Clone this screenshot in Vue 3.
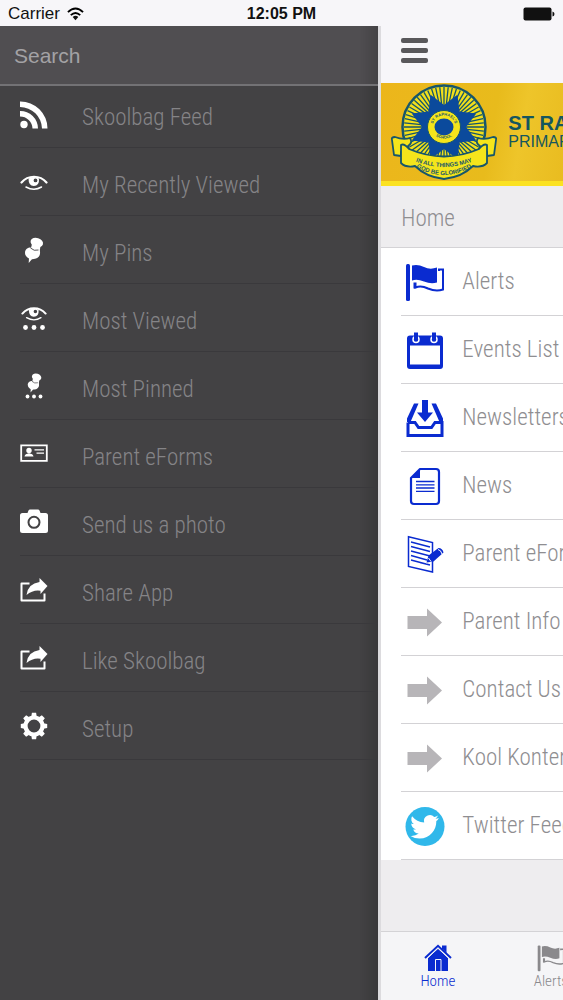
<script setup>
import { ref } from 'vue'

const search = ref('')

const menu = [
  { label: 'Skoolbag Feed', icon: 'rss' },
  { label: 'My Recently Viewed', icon: 'eye' },
  { label: 'My Pins', icon: 'pin' },
  { label: 'Most Viewed', icon: 'eye-dots' },
  { label: 'Most Pinned', icon: 'pin-dots' },
  { label: 'Parent eForms', icon: 'card' },
  { label: 'Send us a photo', icon: 'camera' },
  { label: 'Share App', icon: 'share' },
  { label: 'Like Skoolbag', icon: 'share' },
  { label: 'Setup', icon: 'gear' }
]

const links = [
  { label: 'Alerts', icon: 'flag' },
  { label: 'Events List', icon: 'calendar' },
  { label: 'Newsletters', icon: 'inbox' },
  { label: 'News', icon: 'news' },
  { label: 'Parent eForms', icon: 'form' },
  { label: 'Parent Info', icon: 'arrow' },
  { label: 'Contact Us', icon: 'arrow' },
  { label: 'Kool Kontent', icon: 'arrow' },
  { label: 'Twitter Feed', icon: 'twitter' }
]

// points on a circle around the crest centre
const polar = (r, deg) => {
  const a = (deg - 90) * Math.PI / 180
  return `${(54 + r * Math.cos(a)).toFixed(1)},${(43 + r * Math.sin(a)).toFixed(1)}`
}

const rays = Array.from({ length: 60 }, (_, i) => `M${polar(18, i * 6)}L${polar(40, i * 6)}`).join('')
const star = Array.from({ length: 16 }, (_, i) => polar(i % 2 ? 35 : 22, i * 22.5)).join(' ')
const teeth = Array.from({ length: 8 }, (_, i) => i * 45)
</script>

<template>
  <div class="app">
    <svg class="sprite" aria-hidden="true">
      <symbol id="i-rss" viewBox="0 0 28 28">
        <circle cx="4" cy="23.500" r="3.700" />
        <path d="M0 0.500A27 27 0 0 1 27.500 27.500H22A22 22 0 0 0 0 6ZM0 10A17.500 17.500 0 0 1 18 27.500H12.500A12.500 12.500 0 0 0 0 15.500Z" />
      </symbol>
      <symbol id="i-eye" viewBox="0 0 28 28">
        <path fill="none" stroke="currentColor" stroke-width="2.200" stroke-linecap="round" d="M1.500 13.500C8 5.800 20 5.800 26.500 13.500" />
        <path fill="none" stroke="currentColor" stroke-width="1.500" stroke-linecap="round" d="M6 18C11 20.800 17 20.800 21.500 18" />
        <path fill-rule="evenodd" d="M8.500 9.500Q14 6.500 19 9.500Q19.500 17 13.800 17Q8.500 17 8.500 9.500ZM15.500 9.500A1.900 1.900 0 1 0 15.500 13.300A1.900 1.900 0 1 0 15.500 9.500Z" />
      </symbol>
      <symbol id="i-pin" viewBox="0 0 28 28">
        <ellipse cx="16.800" cy="5.500" rx="6.400" ry="4.600" transform="rotate(18 16.800 5.500)" />
        <path d="M12 7L20.500 9L19.500 15L10.500 13Z" />
        <path d="M5 16C5 12 8 10.500 10.500 10.500Q14 14.500 19.300 12.500C21 16 20 20 16 21.500Q11 23 8 21Q5 19 5 16Z" />
        <path d="M9 20.500L12.500 21.500L8.700 26Z" />
        <path fill="none" stroke="#434244" stroke-width="0.900" d="M10.500 11Q14 14.500 18.500 13" />
      </symbol>
      <symbol id="i-eye-dots" viewBox="0 0 28 28">
        <use href="#i-eye" x="1" y="-4" width="26" height="26" />
        <circle cx="5.500" cy="22.500" r="2.400" /><circle cx="14" cy="22.500" r="2.400" /><circle cx="22.500" cy="22.500" r="2.400" />
      </symbol>
      <symbol id="i-pin-dots" viewBox="0 0 28 28">
        <use href="#i-pin" x="4" y="0" width="21" height="21" />
        <circle cx="7.500" cy="23.500" r="1.900" /><circle cx="14" cy="23.500" r="1.900" /><circle cx="20.500" cy="23.500" r="1.900" />
      </symbol>
      <symbol id="i-card" viewBox="0 0 28 28">
        <path fill="none" stroke="currentColor" stroke-width="1.800" d="M1.200 4.400H26.800V19.800H1.200Z" />
        <circle cx="9" cy="9.500" r="2.700" />
        <path d="M4.500 15.500Q5 12.800 9 12.300Q13 12.800 13.500 15.500ZM14.500 8.300H24V9.500H14.500ZM16.500 11.500H24V12.700H16.500Z" />
      </symbol>
      <symbol id="i-camera" viewBox="0 0 28 28">
        <path fill-rule="evenodd" d="M2.500 4H7.500L8.500 1.500Q9 0.500 10 0.500H18Q19 0.500 19.500 1.500L20.500 4H25.500Q28 4 28 6.500V21.500Q28 24 25.500 24H2.500Q0 24 0 21.500V6.500Q0 4 2.500 4ZM14 6.800A6.500 6.500 0 1 0 14 19.800A6.500 6.500 0 1 0 14 6.800ZM14 8.800A4.500 4.500 0 1 1 14 17.800A4.500 4.500 0 1 1 14 8.800Z" />
      </symbol>
      <symbol id="i-share" viewBox="0 0 28 28">
        <path fill="none" stroke="currentColor" stroke-width="2" stroke-linejoin="round" d="M9.500 6.500H1.500V23.500H24.500V16.500" />
        <path d="M19.500 1L27.500 9L20.500 17V13.700Q13 12.500 6.500 18Q8 6.500 19.500 5Z" />
      </symbol>
      <symbol id="i-gear" viewBox="0 0 28 28">
        <g transform="translate(0 -1)">
          <circle cx="14" cy="14" r="8.500" fill="none" stroke="currentColor" stroke-width="4.200" />
          <path v-for="t in teeth" :key="t" :transform="`rotate(${t} 14 14)`" d="M11.300 4.500L11.900 0.800H16.100L16.700 4.500Z" />
        </g>
      </symbol>
      <symbol id="i-flag" viewBox="0 0 40 40">
        <rect x="1" y="2" width="4" height="37" rx="1.500" />
        <path d="M7 3.500Q13 2 19 5T32 5.500V20.500Q26 22.500 19 19.500T7 18.500Z" />
        <path fill="none" stroke="currentColor" stroke-width="2" d="M34 9V7.500H38V27.500Q31 30 23 26.500Q16 23 10.500 25.500V20.500M9.500 20.500V26.500" />
      </symbol>
      <symbol id="i-calendar" viewBox="0 0 40 40">
        <path fill-rule="evenodd" d="M5 5.500H35Q38 5.500 38 8.500V36Q38 39 35 39H5Q2 39 2 36V8.500Q2 5.500 5 5.500ZM5 15.500V34.500H35V15.500Z" />
        <circle cx="11" cy="9.500" r="3" fill="none" stroke="#fff" stroke-width="1.500" />
        <circle cx="29" cy="9.500" r="3" fill="none" stroke="#fff" stroke-width="1.500" />
        <path d="M9 2.500H13V10H9ZM27 2.500H31V10H27Z" />
      </symbol>
      <symbol id="i-inbox" viewBox="0 0 40 40">
        <path fill="none" stroke="currentColor" stroke-width="3" d="M3 24.500V37.500H37V24.500H30L26.500 29.500H13.500L10 24.500H3" />
        <path d="M9 5.500H13.500L5.500 24H2V20.500ZM31 5.500H26.500L34.500 24H38V20.500ZM17 2H23V14.500H28L20 24L12 14.500H17Z" />
      </symbol>
      <symbol id="i-news" viewBox="0 0 40 40">
        <path fill="none" stroke="currentColor" stroke-width="2.200" stroke-linejoin="round" d="M15 3H31Q34 3 34 6V35Q34 38 31 38H9Q6 38 6 35V12Z" />
        <path d="M15 3V12H6Z" />
        <path fill="none" stroke="currentColor" stroke-width="1.300" d="M11 15.500H29.500M11 18.800H29.500M11 22H29.500M11 25.300H29.500" />
      </symbol>
      <symbol id="i-form" viewBox="0 0 40 40">
        <path fill="none" stroke="currentColor" stroke-width="1.500" d="M3.500 2.800L27.500 8.500V38L3.500 32.500Z" />
        <path fill="none" stroke="currentColor" stroke-width="1.300" d="M6 8L25 13M6 12.500L25 17.500M6 17L25 22M6 21.500L22 26M6 26L21 30M15 28.500L25 31" />
        <path d="M21.500 28.500L23.500 21.500L33.500 14Q37.500 14 38.500 18.500L28.500 27.500Z" />
        <path fill="none" stroke="#fff" stroke-width="1" d="M33 15.500Q36 16 37 20M23.500 24L26 27.500" />
      </symbol>
      <symbol id="i-arrow" viewBox="0 0 40 40">
        <path d="M2.500 14H22V6.500L37 20.500L22 34.500V27H2.500Z" />
      </symbol>
      <symbol id="i-twitter" viewBox="0 0 40 40">
        <circle cx="20" cy="20.500" r="19.500" />
        <path fill="#fff" transform="translate(5.500 6) scale(1.200)" d="M23.600 4.900a9.700 9.700 0 0 1-2.800 .8 4.900 4.900 0 0 0 2.100-2.700c-1 .6-2 1-3.100 1.200a4.900 4.900 0 0 0-8.400 4.500A14 14 0 0 1 1.300 3.500a4.900 4.900 0 0 0 1.500 6.600c-.8 0-1.600-.2-2.200-.6v.1c0 2.400 1.700 4.400 3.900 4.800-.7 .2-1.500 .2-2.200 .1 .6 2 2.400 3.400 4.600 3.400A9.900 9.900 0 0 1 0 19.900a14 14 0 0 0 7.500 2.200c9.100 0 14-7.500 14-14v-.6c1-.7 1.800-1.600 2.100-2.600z" />
      </symbol>
      <symbol id="i-home" viewBox="0 0 28 28">
        <path d="M4 14L14 4.500L24 14V27H4Z" />
        <path d="M18 1.500H22.500V9L18 4.500Z" />
        <path fill="none" stroke="currentColor" stroke-width="2" d="M1 14L14 1.800L27 14" />
        <path fill="none" stroke="#f5f5f7" stroke-width="1" d="M3 14.500L14 4.300L25 14.500M11.500 27V15.500H17V27" />
      </symbol>
    </svg>

    <header class="status">
      <span class="carrier">
        Carrier
        <svg class="wifi" viewBox="0 0 18 14">
          <path fill="none" stroke="#000" stroke-width="2" d="M1 5Q9-2.500 17 5M4 8.200Q9 3.500 14 8.200" />
          <path d="M6 10.300Q9 7.600 12 10.300L9 13.500Z" />
        </svg>
      </span>
      <span class="time">12:05 PM</span>
      <span class="battery">
        <svg viewBox="0 0 32 14">
          <rect x="0.500" y="0.500" width="28" height="13" rx="2" />
          <path d="M29.500 4.500Q31.500 5 31.500 7T29.500 9.500Z" />
        </svg>
      </span>
    </header>

    <div class="body">
      <aside class="drawer">
        <input v-model="search" class="search" type="search" placeholder="Search" aria-label="Search">
        <ul class="menu">
          <li v-for="item in menu" :key="item.label">
            <a href="#" class="menu-link">
              <svg class="menu-icon"><use :href="`#i-${item.icon}`" /></svg>
              <span>{{ item.label }}</span>
            </a>
          </li>
        </ul>
      </aside>

      <main class="page">
        <div class="toolbar">
          <button class="burger" type="button" aria-label="Menu">
            <span></span><span></span><span></span>
          </button>
        </div>

        <div class="banner">
          <svg class="crest" viewBox="0 0 108 96">
            <circle cx="54" cy="43" r="41.500" fill="#f1df1c" stroke="#17566b" stroke-width="2.500" />
            <path :d="rays" fill="none" stroke="#17566b" stroke-width="1.300" />
            <polygon :points="star" fill="#0b4a9c" />
            <circle cx="54" cy="43" r="16.500" fill="#f5e51b" stroke="#17566b" stroke-width="1" />
            <ellipse cx="54" cy="43" rx="9.500" ry="8.500" fill="#0b4a9c" />
            <path id="ring-top" fill="none" d="M42.500 43A11.500 11.500 0 0 1 65.500 43" />
            <path id="ring-bottom" fill="none" d="M40 44A14.500 14.500 0 0 0 68 44" />
            <text class="ring-text"><textPath href="#ring-top" startOffset="50%">ST RAPHAEL'S</textPath></text>
            <text class="ring-text"><textPath href="#ring-bottom" startOffset="50%">SCHOOL</textPath></text>
            <g fill="#f5e51b" stroke="#17566b" stroke-width="1.800" stroke-linejoin="round">
              <path d="M2 56Q1 53 5 53Q13 56 20 54Q23 59 18 62L18 68H11V72L4 71Z" />
              <path d="M106 56Q107 53 103 53Q95 56 88 54Q85 59 90 62L90 68H97V72L104 71Z" />
              <path d="M11 61Q14 59 19 65Q54 80 89 65Q94 59 97 61L97 79Q92 84 83 82Q72 93 54 95Q36 93 25 82Q16 84 11 79Z" />
            </g>
            <path id="motto-1" fill="none" d="M20 75Q54 91 88 75" />
            <path id="motto-2" fill="none" d="M24 82Q54 100 84 82" />
            <text class="motto"><textPath href="#motto-1" startOffset="50%">IN ALL THINGS MAY</textPath></text>
            <text class="motto"><textPath href="#motto-2" startOffset="50%">GOD BE GLORIFIED</textPath></text>
          </svg>
          <div class="school">
            <strong>ST RAPHAEL'S</strong>
            <span>PRIMARY SCHOOL</span>
          </div>
        </div>

        <h1 class="title">Home</h1>

        <ul class="links">
          <li v-for="item in links" :key="item.label">
            <a href="#" class="link">
              <svg :class="['link-icon', item.icon]"><use :href="`#i-${item.icon}`" /></svg>
              <span>{{ item.label }}</span>
            </a>
          </li>
        </ul>

        <nav class="tabs">
          <a href="#" class="tab active">
            <svg class="tab-icon"><use href="#i-home" /></svg>
            Home
          </a>
          <a href="#" class="tab">
            <svg class="tab-icon"><use href="#i-flag" /></svg>
            Alerts
          </a>
        </nav>
      </main>
    </div>
  </div>
</template>

<style>
body {
  background: #434244;
}
</style>

<style scoped>
.app {
  display: flex;
  flex-direction: column;
  min-height: 100vh;
  overflow: hidden;
  font-family: "Roboto Condensed", Roboto, sans-serif;
  font-weight: 300;
}

.app * {
  box-sizing: border-box;
}

ul {
  list-style: none;
  margin: 0;
  padding: 0;
}

a {
  text-decoration: none;
}

svg {
  flex: none;
  fill: currentColor;
}

.sprite {
  position: absolute;
  width: 0;
  height: 0;
}

.status {
  display: grid;
  grid-template-columns: 1fr auto 1fr;
  align-items: center;
  height: 26px;
  padding: 2px 8px 0;
  background: #f7f6f9;
  color: #111;
  font: 400 17px/24px "Liberation Sans", Arial, sans-serif;
}

.carrier {
  display: flex;
  align-items: center;
  gap: 7px;
}

.wifi {
  width: 17px;
  height: 14px;
}

.time {
  font-size: 16px;
  font-weight: 700;
}

.battery {
  display: flex;
  justify-content: flex-end;
}

.battery svg {
  width: 32px;
  height: 14px;
}

.body {
  flex: 1;
  display: flex;
}

.drawer {
  flex: 0 0 67.2%;
  background: linear-gradient(90deg, transparent 95%, rgba(0, 0, 0, 0.15)), #434244;
}

.search {
  display: block;
  width: 100%;
  height: 60px;
  padding: 2px 14px 0;
  border: 0;
  border-bottom: 2px solid #737275;
  border-radius: 0;
  outline: 0;
  appearance: none;
  background: linear-gradient(90deg, transparent 95%, rgba(0, 0, 0, 0.15)), #504e51;
  color: #a6a5a8;
  font: 400 21px/28px "Liberation Sans", Arial, sans-serif;
}

.search::placeholder {
  color: #a3a2a5;
  opacity: 1;
}

.menu li {
  margin-left: 20px;
  border-bottom: 1px solid #3a393c;
}

.menu-link {
  display: flex;
  align-items: flex-end;
  gap: 34px;
  height: 67px;
  padding-bottom: 16px;
  color: #858487;
  font-size: 23px;
  line-height: 26px;
}

.menu li:first-child .menu-link {
  height: 61px;
}

.menu-icon {
  width: 28px;
  height: 32px;
  color: #fff;
}

.page {
  position: relative;
  flex: 1;
  min-width: 0;
  display: flex;
  flex-direction: column;
  overflow: hidden;
  border-left: 3px solid #dcdbde;
  background: #eeedef;
}

.toolbar {
  display: flex;
  align-items: center;
  height: 57px;
  padding: 0 20px 8px;
  background: #f7f6f9;
}

.burger {
  display: flex;
  flex-direction: column;
  gap: 5px;
  padding: 0;
  border: 0;
  background: none;
}

.burger span {
  width: 27px;
  height: 5px;
  border-radius: 2px;
  background: #59585b;
}

.banner {
  display: flex;
  align-items: center;
  gap: 10px;
  height: 103px;
  padding-left: 9px;
  border-bottom: 5px solid #fbe222;
  background: linear-gradient(100deg, #ecb61b, #e8bb1c 60%, #eec52a 75%, #e9bc20);
}

.crest {
  width: 108px;
  height: 96px;
  overflow: visible;
}

.ring-text,
.motto {
  fill: #17566b;
  font-family: "Liberation Sans", Arial, sans-serif;
  font-weight: 700;
  font-size: 4px;
  text-anchor: middle;
}

.motto {
  font-size: 6px;
}

.school {
  display: flex;
  flex-direction: column;
  color: #15565f;
  font: 400 16px/18px "Liberation Sans", Arial, sans-serif;
  white-space: nowrap;
}

.school strong {
  font-size: 20px;
  line-height: 20px;
}

.title {
  margin: 0;
  padding: 5px 20px 0;
  border-bottom: 1px solid #d4d3d6;
  color: #8f8e91;
  font-size: 23px;
  font-weight: 300;
  line-height: 56px;
}

.links {
  background: #fff;
}

.links li {
  margin-left: 20px;
  border-bottom: 1px solid #d3d2d5;
}

.link {
  display: flex;
  align-items: center;
  gap: 17px;
  height: 67px;
  padding-left: 4px;
  color: #8f8e91;
  font-size: 23px;
  line-height: 26px;
  white-space: nowrap;
}

.link-icon {
  width: 40px;
  height: 40px;
  color: #0a2bd0;
}

.link-icon.arrow {
  color: #b7b5b8;
}

.link-icon.twitter {
  color: #30b8ea;
}

.tabs {
  display: flex;
  height: 69px;
  margin-top: auto;
  border-top: 1px solid #d4d3d6;
  background: #f5f5f7;
}

.tab {
  flex: 0 0 113px;
  display: flex;
  flex-direction: column;
  align-items: center;
  padding-top: 12px;
  color: #8a898c;
  font-size: 15px;
  line-height: 18px;
}

.tab.active {
  color: #0a2bd0;
}

.tab-icon {
  width: 28px;
  height: 28px;
}
</style>
